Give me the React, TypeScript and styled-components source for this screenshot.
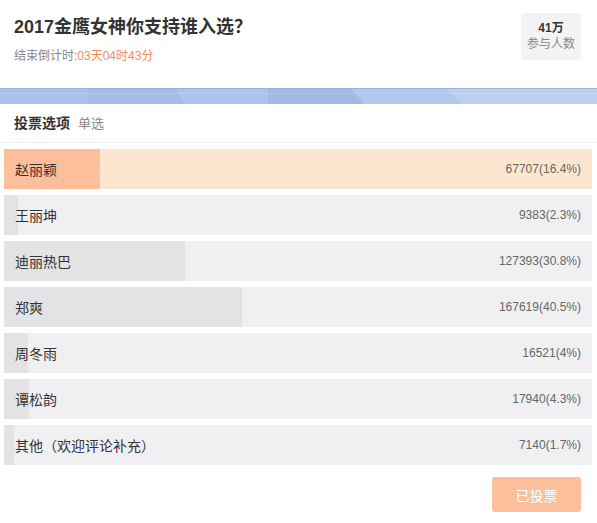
import React from "react";
import styled, {createGlobalStyle} from "styled-components";

const GlobalStyle = createGlobalStyle`
	body {
		margin: 0;
		background: #fff;
		font-family: "Liberation Sans", "Noto Sans CJK SC", sans-serif;
		color: #333;
	}
`;

type Option = {
	name: string;
	votes: number;
	percent: string;
	ratio: number;
};

const options: Option[] = [
	{name: "赵丽颖", votes: 67707, percent: "16.4%", ratio: 16.4},
	{name: "王丽坤", votes: 9383, percent: "2.3%", ratio: 2.3},
	{name: "迪丽热巴", votes: 127393, percent: "30.8%", ratio: 30.8},
	{name: "郑爽", votes: 167619, percent: "40.5%", ratio: 40.5},
	{name: "周冬雨", votes: 16521, percent: "4%", ratio: 4},
	{name: "谭松韵", votes: 17940, percent: "4.3%", ratio: 4.3},
	{name: "其他（欢迎评论补充）", votes: 7140, percent: "1.7%", ratio: 1.7},
];

const selected = 0;

const Banner = () => (
	<BannerSvg viewBox="0 0 597 16" preserveAspectRatio="none">
		<rect x="0" y="0" width="597" height="16" fill="#a9c2ea" />
		<polygon points="88,0 175,0 185,16 88,16" fill="#a4bde8" />
		<polygon points="175,0 268,0 268,16 185,16" fill="#aac4ec" />
		<polygon points="268,0 350,0 365,16 268,16" fill="#a2b9e4" />
		<polygon points="350,0 445,0 462,16 365,16" fill="#b0c8ec" />
		<polygon points="445,0 597,0 597,16 462,16" fill="#bccfee" />
		<rect x="0" y="0" width="597" height="1" fill="#9bb2d8" />
		<rect x="0" y="5" width="597" height="1" fill="#ffffff" opacity="0.15" />
	</BannerSvg>
);

const App: React.FC = () => {
	return (
		<Page>
			<GlobalStyle />
			<Header>
				<TitleBlock>
					<Title>2017金鹰女神你支持谁入选？</Title>
					<Countdown>
						结束倒计时:<Remaining>03天04时43分</Remaining>
					</Countdown>
				</TitleBlock>
				<Participants>
					<Count>41万</Count>
					<CountLabel>参与人数</CountLabel>
				</Participants>
			</Header>
			<Banner />
			<SectionHead>
				<SectionTitle>投票选项</SectionTitle>
				<SectionHint>单选</SectionHint>
			</SectionHead>
			<OptionList>
				{options.map((o, i) => (
					<OptionRow key={o.name} $active={i === selected}>
						<Fill $active={i === selected} style={{width: `${o.ratio}%`}} />
						<OptionName>{o.name}</OptionName>
						<OptionValue>
							{o.votes}({o.percent})
						</OptionValue>
					</OptionRow>
				))}
			</OptionList>
			<Footer>
				<VotedButton disabled>已投票</VotedButton>
			</Footer>
		</Page>
	);
};

export default App;

const Page = styled.div`
	width: 597px;
	height: 523px;
	overflow: hidden;
`;

const Header = styled.div`
	display: flex;
	justify-content: space-between;
	align-items: flex-start;
	padding: 13px 16px 0 14px;
	height: 75px;
`;

const TitleBlock = styled.div`
	display: flex;
	flex-direction: column;
	padding-top: 2px;
`;

const Title = styled.h1`
	margin: 0;
	font-size: 18px;
	font-weight: bold;
	line-height: 24px;
	color: #333;
`;

const Countdown = styled.div`
	margin-top: 9px;
	font-size: 12px;
	line-height: 16px;
	color: #888;
`;

const Remaining = styled.span`
	color: #f08c5c;
`;

const Participants = styled.div`
	width: 60px;
	height: 47px;
	background: #f3f3f3;
	border-radius: 2px;
	display: flex;
	flex-direction: column;
	align-items: center;
	justify-content: center;
`;

const Count = styled.div`
	font-size: 12px;
	font-weight: bold;
	color: #333;
	line-height: 16px;
`;

const CountLabel = styled.div`
	font-size: 12px;
	color: #888;
	line-height: 17px;
`;

const BannerSvg = styled.svg`
	display: block;
	width: 597px;
	height: 16px;
`;

const SectionHead = styled.div`
	display: flex;
	align-items: baseline;
	gap: 8px;
	height: 38px;
	padding: 0 14px;
	line-height: 38px;
	border-bottom: 1px solid #ececec;
`;

const SectionTitle = styled.span`
	font-size: 14px;
	font-weight: bold;
	color: #333;
`;

const SectionHint = styled.span`
	font-size: 13px;
	color: #888;
`;

const OptionList = styled.div`
	display: flex;
	flex-direction: column;
	gap: 6px;
	padding: 6px 5px 0 4px;
`;

const OptionRow = styled.div<{$active: boolean}>`
	position: relative;
	display: flex;
	justify-content: space-between;
	align-items: center;
	height: 40px;
	padding: 0 11px 0 11px;
	background: ${p => (p.$active ? "#fde6d0" : "#f0f0f3")};
	overflow: hidden;
`;

const Fill = styled.div<{$active: boolean}>`
	position: absolute;
	left: 0;
	top: 0;
	bottom: 0;
	background: ${p => (p.$active ? "#fcbe9b" : "#e3e3e5")};
`;

const OptionName = styled.span`
	position: relative;
	font-size: 14px;
	color: #333;
`;

const OptionValue = styled.span`
	position: relative;
	font-size: 12px;
	color: #666;
`;

const Footer = styled.div`
	display: flex;
	justify-content: flex-end;
	padding: 12px 16px 0 0;
`;

const VotedButton = styled.button`
	width: 89px;
	height: 35px;
	border: none;
	border-radius: 3px;
	background: #fcbf9c;
	color: #fff;
	font-family: "Liberation Sans", "Noto Sans CJK SC", sans-serif;
	font-size: 14px;
	cursor: default;
`;
